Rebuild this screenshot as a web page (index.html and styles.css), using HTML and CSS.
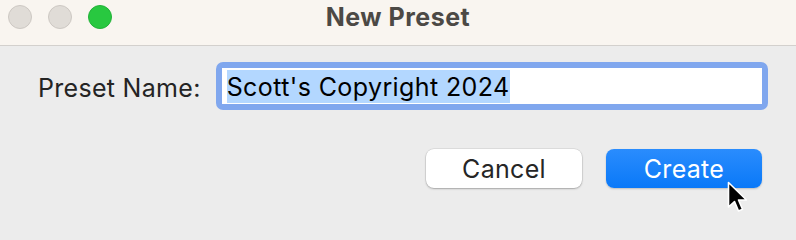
FILE: index.html
```html
<!DOCTYPE html>
<html>
<head>
<meta charset="utf-8">
<link rel="stylesheet" href="styles.css">
</head>
<body>
<div class="window">
  <div class="titlebar">
    <div class="lights">
      <span class="light gray"></span>
      <span class="light gray"></span>
      <span class="light green"></span>
    </div>
    <div class="title">New Preset</div>
  </div>
  <div class="content">
    <div class="row">
      <label class="label">Preset Name:</label>
      <div class="field">
        <div class="field-inner"><span class="sel">Scott's Copyright 2024</span></div>
      </div>
    </div>
    <div class="buttons">
      <button class="btn cancel">Cancel</button>
      <button class="btn create">Create</button>
    </div>
  </div>
  <svg class="cursor" width="22" height="34" viewBox="0 0 22 34">
    <path d="M1.5 1.5 L1.5 26 L7.5 20.5 L11.5 30 L15.5 28.3 L11.5 19 L19.5 19 Z" fill="#000" stroke="#fff" stroke-width="1.6" stroke-linejoin="round"/>
  </svg>
</div>
</body>
</html>
```
FILE: styles.css
```css
html, body {
  margin: 0;
  padding: 0;
}
body {
  width: 796px;
  height: 216px;
  overflow: hidden;
  background: #ececec;
  font-family: Inter, "Liberation Sans", sans-serif;
}
.window {
  position: relative;
  width: 796px;
  height: 216px;
}
.titlebar {
  position: relative;
  height: 45px;
  background: #f9f5f0;
  border-bottom: 1px solid #d3d0cd;
  display: flex;
  align-items: center;
  justify-content: center;
}
.lights {
  position: absolute;
  left: 8px;
  top: 5px;
  display: flex;
  gap: 16px;
}
.light {
  width: 24px;
  height: 24px;
  border-radius: 50%;
  box-sizing: border-box;
}
.light.gray {
  background: #e0dcd7;
  border: 1px solid #cdc8c3;
}
.light.green {
  background: #28c840;
  border: 1px solid #22b238;
}
.title {
  font-weight: 700;
  font-size: 25px;
  letter-spacing: 0.5px;
  color: #4c4945;
  margin-top: -12px;
}
.content {
  padding: 16px 28px 0 38px;
}
.row {
  display: flex;
  align-items: center;
  gap: 15px;
}
.label {
  font-size: 25px;
  letter-spacing: 0.3px;
  color: #242424;
  padding-top: 4px;
}
.field {
  flex: 1;
  background: #80a7ee;
  border-radius: 7px;
  padding: 6px;
  height: 36px;
}
.field-inner {
  background: #fff;
  height: 36px;
  box-sizing: border-box;
  padding: 2px 5px 1px;
}
.sel {
  display: inline-block;
  background: #b3d7ff;
  font-size: 25px;
  letter-spacing: 0.4px;
  line-height: 33px;
  padding-top: 1px;
  height: 33px;
  box-sizing: border-box;
  color: #000;
}
.buttons {
  display: flex;
  justify-content: flex-end;
  gap: 24px;
  margin-top: 39px;
  margin-right: 6px;
}
.btn {
  width: 156px;
  height: 39px;
  border-radius: 8px;
  font-family: inherit;
  font-size: 25px;
  letter-spacing: 0.3px;
  border: none;
  padding: 0;
}
.cancel {
  background: #fff;
  color: #262626;
  box-shadow: 0 0 0 0.5px rgba(0,0,0,0.12), 0 1px 2px rgba(0,0,0,0.25);
}
.create {
  background: linear-gradient(#2a8cfd, #0a79f8);
  color: #fff;
  box-shadow: 0 1px 2px rgba(0,0,0,0.2);
}
.cursor {
  position: absolute;
  left: 727px;
  top: 181px;
}
```
